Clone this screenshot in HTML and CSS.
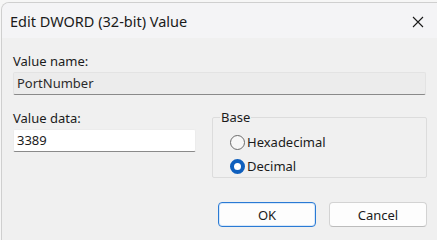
FILE: index.html
```html
<!DOCTYPE html>
<html>
<head>
<meta charset="utf-8">
<link rel="stylesheet" href="styles.css">
</head>
<body>
<div class="window">
  <div class="titlebar">
    <span class="title">Edit DWORD (32-bit) Value</span>
    <span class="close">
      <svg width="12" height="12" viewBox="0 0 12 12"><path d="M1 1L11 11M11 1L1 11" stroke="#1a1a1a" stroke-width="1.1" fill="none"/></svg>
    </span>
  </div>
  <div class="content">
    <div class="label first">Value name:</div>
    <div class="field readonly">PortNumber</div>
    <div class="row">
      <div class="col-left">
        <div class="label">Value data:</div>
        <div class="field input">3389</div>
      </div>
      <fieldset class="group">
        <legend>Base</legend>
        <div class="radio"><span class="circle"></span><span>Hexadecimal</span></div>
        <div class="radio"><span class="circle checked"></span><span>Decimal</span></div>
      </fieldset>
    </div>
    <div class="buttons">
      <div class="btn default">OK</div>
      <div class="btn">Cancel</div>
    </div>
  </div>
</div>
</body>
</html>
```
FILE: styles.css
```css
html, body {
  margin: 0;
  padding: 0;
  background: #f6f6f6;
  height: 240px;
  overflow: hidden;
}
body {
  font-family: "Noto Sans", "Open Sans", sans-serif;
  color: #1b1b1b;
}
.window {
  margin: 2px 0 0 1px;
  width: 445px;
  height: 238px;
  background: #f0f0f0;
  border: 1px solid #cfcfcf;
  border-bottom: none;
  border-radius: 8px 8px 0 0;
  overflow: hidden;
  box-sizing: border-box;
}
.titlebar {
  height: 35px;
  background: #f4f4f6;
  display: flex;
  align-items: center;
  padding-left: 8px;
}
.title {
  font-size: 14.5px;
  color: #1a1a1a;
  padding-top: 1px;
}
.close {
  margin-left: auto;
  margin-right: 21px;
  display: flex;
  padding-top: 2px;
}
.content {
  padding: 0 0 0 11px;
}
.label {
  font-size: 13px;
  line-height: 16px;
  color: #1b1b1b;
}
.label.first {
  padding-top: 15px;
  margin-bottom: 3px;
}
.field {
  height: 23px;
  box-sizing: border-box;
  font-size: 13px;
  line-height: 21px;
  padding-left: 3px;
  border: 1px solid #e3e3e3;
  border-bottom-color: #8a8a8a;
  border-radius: 2px;
}
.field.readonly {
  width: 413px;
  background: #ececec;
  color: #2b2b2b;
}
.row {
  display: flex;
  margin-top: 13px;
}
.col-left {
  width: 183px;
  padding-top: 2px;
}
.col-left .label {
  margin-bottom: 3px;
}
.field.input {
  background: #ffffff;
  border-color: #ececec;
  border-bottom-color: #8a8a8a;
}
.group {
  margin: 0 0 0 16px;
  padding: 4px 0 0 17px;
  width: 215px;
  height: 70px;
  box-sizing: border-box;
  border: 1px solid #dcdcdc;
  border-radius: 2px;
}
.group legend {
  font-size: 13px;
  padding: 0 1px;
  margin-left: -10px;
  color: #1b1b1b;
}
.radio {
  display: flex;
  align-items: center;
  font-size: 13px;
  height: 24px;
  gap: 2px;
}
.circle {
  width: 15px;
  height: 15px;
  box-sizing: border-box;
  border: 1px solid #6a6a6a;
  border-radius: 50%;
  background: #f7f7f7;
}
.circle.checked {
  border: 4.5px solid #0f5fbd;
  background: #ffffff;
}
.buttons {
  display: flex;
  gap: 13px;
  margin-top: 24px;
  margin-left: 205px;
}
.btn {
  width: 98px;
  height: 25px;
  box-sizing: border-box;
  border: 1px solid #d3d3d3;
  border-bottom-color: #bcbcbc;
  border-radius: 4px;
  background: #fdfdfd;
  font-size: 13px;
  display: flex;
  align-items: center;
  justify-content: center;
}
.btn.default {
  border: 1px solid #2a7ad4;
  box-shadow: inset 0 0 0 1px #d7e8fa;
}
```
